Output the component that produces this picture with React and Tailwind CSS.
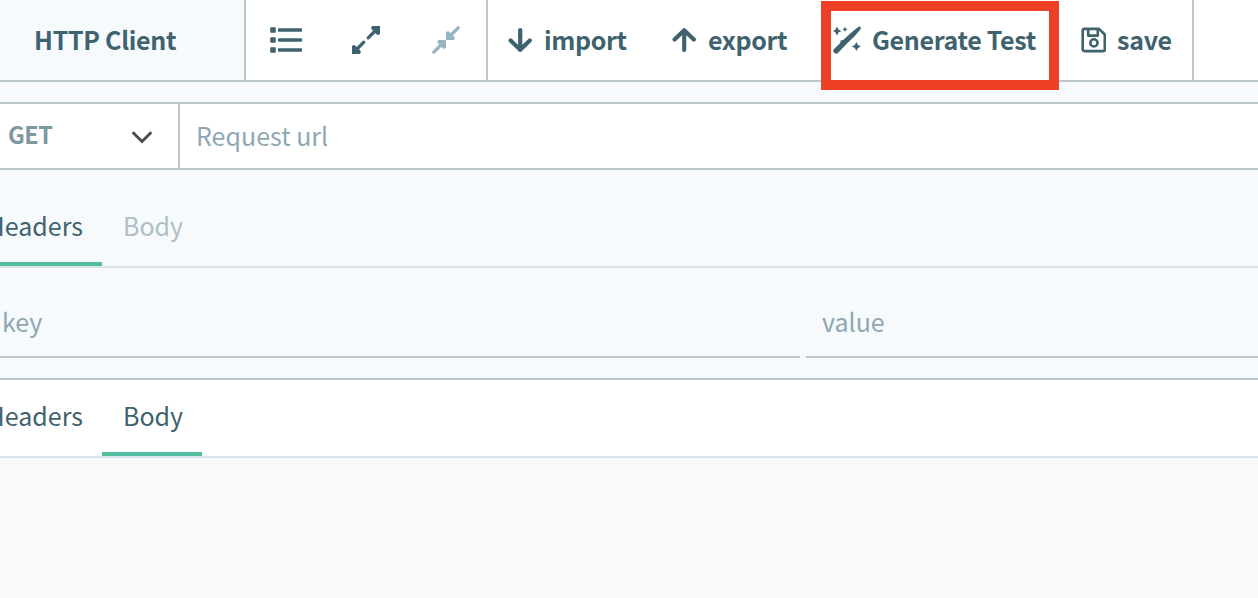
function ListIcon() {
  return (
    <svg className="h-7 w-8 shrink-0" viewBox="0 0 32 28" fill="currentColor">
      {[4, 14, 24].map((y) => (
        <g key={y}>
          <rect x="0.2" y={y - 2.8} width="5.6" height="5.6" rx="0.8" />
          <rect x="8" y={y - 1.7} width="24" height="3.4" rx="0.8" />
        </g>
      ))}
    </svg>
  );
}

function ExpandIcon() {
  return (
    <svg className="size-7 shrink-0" viewBox="0 0 28 28" fill="currentColor" stroke="currentColor" strokeLinecap="round" strokeLinejoin="round">
      <path d="M16.2 11.8L23 5M11.8 16.2L5 23" fill="none" strokeWidth="3.2" />
      <path d="M19.8 1.4L20.6 .6H27.4V7.4L26.6 8.4L24.8 7.8L20.2 3.2ZM1.4 19.6L.6 20.6V27.4H7.4L8.2 26.6L7.8 24.8L3.2 20.2Z" strokeWidth="1.2" />
    </svg>
  );
}

function CollapseIcon() {
  return (
    <svg className="size-7 shrink-0" viewBox="0 0 28 28" fill="currentColor" stroke="currentColor" strokeLinecap="round" strokeLinejoin="round">
      <path d="M26.2 1.8L19 9M1.8 26.2L9 19" fill="none" strokeWidth="3.2" />
      <path d="M16.2 5.8L14.6 6.6V13.4H21.4L22.3 12L21.6 11ZM5.8 16.2L6.6 14.6H13.4V21.4L12 22.3L11 21.6Z" strokeWidth="1.2" />
    </svg>
  );
}

function ArrowIcon({ up }) {
  return (
    <svg className="h-[26px] w-6 shrink-0" viewBox="0 0 24 26" fill="none" stroke="currentColor" strokeWidth="4.2" strokeLinecap="round" strokeLinejoin="round">
      {up ? <path d="M12.2 23V3.5M2.6 12.6L12.2 3.2L21.8 12.6" /> : <path d="M12.2 3V23M2.6 13.4L12.2 22.8L21.8 13.4" />}
    </svg>
  );
}

function WandIcon() {
  return (
    <svg className="size-7 shrink-0" viewBox="0 0 28 28" fill="currentColor">
      <path d="M25.2 .9Q26.4 .1 27.4 1Q28.4 2 27.5 3.2L22 9.8L12.8 18.8L5.2 26.8Q3.6 28.6 1.6 27.1Q-.6 25.2 .8 23.3L7.2 17L7.7 14.6L10.2 14.1L18.4 6.4Z" />
      <path d="M4 .6L5.5 3.5L8.4 5L5.5 6.5L4 9.4L2.5 6.5L-.2 5L2.5 3.5Z" />
      <path d="M12 .8L12.9 2.4L14.5 3.3L12.9 4.2L12 5.8L11.1 4.2L9.5 3.3L11.1 2.4Z" />
      <path d="M23.4 16L25 18.9L27.9 20.5L25 22.1L23.4 25L21.8 22.1L18.9 20.5L21.8 18.9Z" />
    </svg>
  );
}

function SaveIcon() {
  return (
    <svg className="h-[26px] w-[26px] shrink-0" viewBox="0 0 26 26" fill="none" stroke="currentColor" strokeWidth="2.6" strokeLinejoin="round">
      <path d="M4.4 1.9H19L24.8 7.5V22.4Q24.8 24.1 23.1 24.1H4.4Q2.7 24.1 2.7 22.4V3.6Q2.7 1.9 4.4 1.9Z" />
      <path d="M8.2 2V8.6H17.8V2" />
      <circle cx="13.9" cy="15.9" r="3.6" />
    </svg>
  );
}

function Action({ icon, label, className, textClassName = "" }) {
  return (
    <button className={`flex items-center ${className}`}>
      {icon}
      <span className={`pb-0.5 ${textClassName}`}>{label}</span>
    </button>
  );
}

function Tab({ label, active, className }) {
  return (
    <div className={`flex shrink-0 flex-col justify-end border-b-4 whitespace-pre ${active ? "border-[#52bc9e]" : "border-transparent"} ${className}`}>
      {label}
    </div>
  );
}

export default function App() {
  return (
    <div className="relative flex h-[598px] w-[1258px] flex-col overflow-hidden bg-[#f9f9f9] font-['Noto_Sans_CJK_SC',sans-serif] text-[25px] leading-10 text-[#3f626f]">
      <header className="flex h-[82px] shrink-0 border-b-2 border-[#bdc8ce] bg-white font-bold">
        <div className="flex w-[246px] items-center border-r-2 border-[#bdc8ce] bg-[#f6fafd] pb-0.5 pl-[34px] tracking-[-0.3px]">HTTP Client</div>
        <div className="flex w-[242px] items-center gap-[50px] border-r-2 border-[#bdc8ce] pl-6">
          <ListIcon />
          <ExpandIcon />
          <span className="flex pl-0.5 text-[#96b5c1]"><CollapseIcon /></span>
        </div>
        <div className="flex w-[706px] items-center border-r-2 border-[#bdc8ce] pl-5">
          <Action icon={<ArrowIcon />} label="import" className="w-[164px] gap-3" textClassName="tracking-[-0.35px]" />
          <Action icon={<ArrowIcon up />} label="export" className="w-[161px] gap-3" textClassName="tracking-[-0.35px]" />
          <Action icon={<WandIcon />} label="Generate Test" className="w-[247px] gap-[11px]" textClassName="tracking-[-0.32px]" />
          <Action icon={<SaveIcon />} label="save" className="gap-[11px]" textClassName="tracking-[-0.25px]" />
        </div>
      </header>

      <section className="flex h-[298px] shrink-0 flex-col border-b-2 border-[#bdc8ce] bg-[#f6fafd] pt-5">
        <div className="flex h-[68px] border-y-2 border-[#bdc8ce] bg-white">
          <div className="flex w-[180px] items-center justify-between border-r-2 border-[#bdc8ce] pr-[25px] pl-2 text-[#7e989f]">
            <span className="pb-1 text-[23.5px] font-bold tracking-[-0.5px]">GET</span>
            <svg className="mt-0.5 h-[14px] w-[22px]" viewBox="0 0 22 14" fill="none" stroke="#4a4a4a" strokeWidth="2.8">
              <path d="M1.7 2.2L11 11.5L20.3 2.2" />
            </svg>
          </div>
          <div className="flex items-center pb-0.5 pl-4 text-[#90a7b3]">Request url</div>
        </div>
        <div className="flex h-[98px] border-b-2 border-[#d9e3ea]">
          <Tab label="Headers" active className="w-[102px] items-end pr-[19px] pb-[17px]" />
          <Tab label="Body" className="w-[100px] pb-[17px] pl-[21px] text-[#b0bec5]" />
        </div>
        <div className="flex h-[90px] gap-1.5 text-[#90a7b3]">
          <div className="flex w-[800px] items-end border-b-2 border-[#bdc8ce] pb-[15px] pl-0.5">key</div>
          <div className="flex flex-1 items-end border-b-2 border-[#bdc8ce] pb-[15px] pl-4">value</div>
        </div>
      </section>

      <section className="flex h-[78px] shrink-0 border-b-2 border-[#d9e3ea] bg-white">
        <Tab label="Headers" className="w-[102px] items-end pr-[19px] pb-[17px]" />
        <Tab label="Body" active className="w-[100px] pb-[17px] pl-[21px]" />
      </section>

      <div className="absolute top-px left-[821px] h-[89px] w-[238px] border-10 border-[#ee4027]" />
    </div>
  );
}
